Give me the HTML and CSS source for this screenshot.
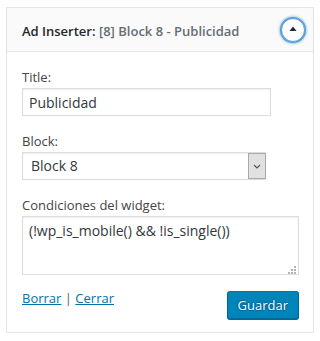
FILE: index.html
```html
<!DOCTYPE html>
<html lang="es">
<head>
<meta charset="utf-8">
<title>Ad Inserter widget</title>
<link rel="stylesheet" href="styles.css">
</head>
<body>
<div class="widget">
  <div class="widget-top">
    <h3 class="widget-title">Ad Inserter: <span class="in-title">[8] Block 8 - Publicidad</span></h3>
    <button class="toggle" type="button" aria-label="Contraer">
      <svg width="22" height="22" viewBox="0 0 22 22" aria-hidden="true"><polygon points="7.5,12 14.5,12 11,7.5" fill="#23282d"/></svg>
    </button>
  </div>
  <div class="widget-inside">
    <div class="field">
      <label class="label" for="title">Title:</label>
      <input class="text-input" id="title" type="text" value="Publicidad">
    </div>
    <div class="field">
      <label class="label">Block:</label>
      <div class="select">
        <span class="select-value">Block 8</span>
        <span class="select-arrow">
          <svg width="8" height="5" viewBox="0 0 8 5" aria-hidden="true"><polyline points="1,1 4,4 7,1" fill="none" stroke="#555" stroke-width="1.1"/></svg>
        </span>
      </div>
    </div>
    <div class="field field-last">
      <label class="label" for="cond">Condiciones del widget:</label>
      <div class="textarea-wrap">
        <textarea class="textarea" id="cond">(!wp_is_mobile() &amp;&amp; !is_single())</textarea>
        <svg class="grip" width="8" height="8" viewBox="0 0 8 8" aria-hidden="true">
          <rect x="6" y="0" width="2" height="2" fill="#b4b4b4"/>
          <rect x="3" y="3" width="2" height="2" fill="#b4b4b4"/>
          <rect x="6" y="3" width="2" height="2" fill="#b4b4b4"/>
          <rect x="0" y="6" width="2" height="2" fill="#b4b4b4"/>
          <rect x="3" y="6" width="2" height="2" fill="#b4b4b4"/>
          <rect x="6" y="6" width="2" height="2" fill="#b4b4b4"/>
        </svg>
      </div>
    </div>
    <div class="actions">
      <div class="links"><a href="#" class="link">Borrar</a> <span class="sep">|</span> <a href="#" class="link">Cerrar</a></div>
      <button class="btn-primary" type="button">Guardar</button>
    </div>
  </div>
</div>
</body>
</html>
```
FILE: styles.css
```css
html, body {
  margin: 0;
  padding: 0;
  background: #fff;
}
body {
  font-family: "Open Sans", "Liberation Sans", sans-serif;
  color: #444;
  padding: 7px 0 0 6px;
}
.widget {
  width: 308px;
  box-sizing: border-box;
  border: 1px solid #e5e5e5;
  background: #fff;
  box-shadow: 0 1px 1px rgba(0,0,0,.04);
}
.widget-top {
  height: 44px;
  box-sizing: border-box;
  border-bottom: 1px solid #e5e5e5;
  background: #fafafa;
  display: flex;
  align-items: center;
  justify-content: space-between;
  padding: 0 7px 0 15px;
}
.widget-title {
  margin: 0;
  padding-top: 2px;
  font-size: 13px;
  font-weight: 600;
  line-height: 20px;
  color: #23282d;
  white-space: nowrap;
}
.in-title {
  color: #666d74;
}
.toggle {
  width: 24px;
  height: 24px;
  box-sizing: border-box;
  margin: 1px 1px 0 0;
  padding: 0;
  border: 1px solid #5b9dd9;
  border-radius: 50%;
  background: #fff;
  box-shadow: 0 0 0 1px #5b9dd9, 0 0 3px 1px rgba(30,140,190,.8);
  display: flex;
  align-items: center;
  justify-content: center;
}
.widget-inside {
  padding: 16px 14px 13px 15px;
}
.field {
  margin-bottom: 16px;
}
.field-last {
  margin-bottom: 14px;
}
.label {
  display: block;
  font-size: 13px;
  line-height: 18px;
  margin-bottom: 2px;
  color: #444;
}
.text-input {
  display: block;
  width: 249px;
  height: 28px;
  box-sizing: border-box;
  margin: 0;
  padding: 0 6px;
  border: 1px solid #ddd;
  box-shadow: inset 0 1px 2px rgba(0,0,0,.07);
  font-family: "Open Sans", "Liberation Sans", sans-serif;
  font-size: 14px;
  color: #32373c;
  background: #fff;
  outline: none;
}
.select {
  display: flex;
  width: 244px;
  height: 28px;
  box-sizing: border-box;
  border: 1px solid #ddd;
  box-shadow: inset 0 1px 2px rgba(0,0,0,.07);
  background: #fff;
}
.select-value {
  flex: 1;
  padding-left: 8px;
  font-size: 14px;
  line-height: 26px;
  color: #32373c;
}
.select-arrow {
  width: 18px;
  margin: 0 -1px 0 0;
  box-sizing: border-box;
  border: 1px solid #a9a9a9;
  background: #e1e1e1;
  display: flex;
  align-items: center;
  justify-content: center;
}
.textarea-wrap {
  position: relative;
}
.textarea {
  display: block;
  width: 100%;
  height: 59px;
  box-sizing: border-box;
  margin: 0;
  padding: 4px 6px;
  border: 1px solid #ddd;
  box-shadow: inset 0 1px 2px rgba(0,0,0,.07);
  font-family: "Open Sans", "Liberation Sans", sans-serif;
  font-size: 14px;
  line-height: 20px;
  color: #32373c;
  resize: none;
  outline: none;
  overflow: hidden;
}
.grip {
  position: absolute;
  right: 3px;
  bottom: 1px;
}
.actions {
  display: flex;
  justify-content: space-between;
  align-items: flex-start;
}
.links {
  font-size: 13px;
  line-height: 18px;
  color: #555d66;
}
.link {
  color: #0073aa;
  text-decoration: underline;
}
.btn-primary {
  margin-top: 2px;
  height: 28px;
  box-sizing: border-box;
  padding: 0 10px 1px;
  border: 1px solid #0073aa;
  border-color: #0073aa #006799 #006799;
  border-radius: 3px;
  background: #0085ba;
  box-shadow: 0 1px 0 #006799;
  color: #fff;
  font-family: "Open Sans", "Liberation Sans", sans-serif;
  font-size: 13px;
  line-height: 26px;
  text-shadow: 0 -1px 1px #006799, 1px 0 1px #006799, 0 1px 1px #006799, -1px 0 1px #006799;
}
```
